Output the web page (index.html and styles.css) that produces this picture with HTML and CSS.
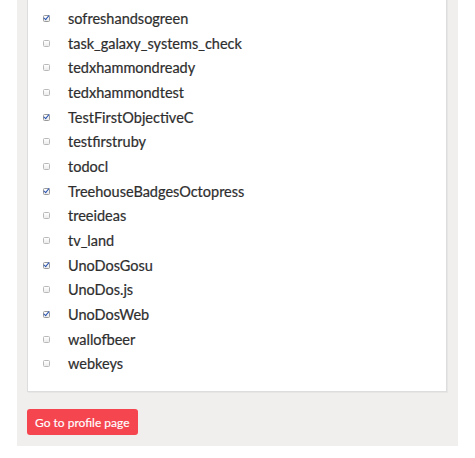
FILE: index.html
```html
<!DOCTYPE html>
<html>
<head>
<meta charset="utf-8">
<link rel="stylesheet" href="styles.css">
</head>
<body>
<div class="panel">
  <div class="box">
    <ul class="repos">
      <li><span class="cb on"></span>sofreshandsogreen</li>
      <li><span class="cb"></span>task_galaxy_systems_check</li>
      <li><span class="cb"></span>tedxhammondready</li>
      <li><span class="cb"></span>tedxhammondtest</li>
      <li><span class="cb on"></span>TestFirstObjectiveC</li>
      <li><span class="cb"></span>testfirstruby</li>
      <li><span class="cb"></span>todocl</li>
      <li><span class="cb on"></span>TreehouseBadgesOctopress</li>
      <li><span class="cb"></span>treeideas</li>
      <li><span class="cb"></span>tv_land</li>
      <li><span class="cb on"></span>UnoDosGosu</li>
      <li><span class="cb"></span>UnoDos.js</li>
      <li><span class="cb on"></span>UnoDosWeb</li>
      <li><span class="cb"></span>wallofbeer</li>
      <li><span class="cb"></span>webkeys</li>
    </ul>
  </div>
  <button class="btn">Go to profile page</button>
</div>
</body>
</html>
```

FILE: styles.css
```css
html, body {
  margin: 0;
  padding: 0;
  background: #ffffff;
}
body {
  font-family: Lato, "Open Sans", sans-serif;
  color: #2e2e2e;
}
.panel {
  width: 420px;
  margin: -20px 0 0 17px;
  background: #f0efed;
  padding: 0 11px 11px 10px;
  box-shadow: 0 2px 0 #d9d9d9;
}
.box {
  background: #ffffff;
  border: 1px solid #dddddd;
  box-shadow: 1px 1px 0 #e6e6e6;
  padding: 25px 0 15px 0;
}
.repos {
  list-style: none;
  margin: 0;
  padding: 0 0 0 15px;
}
.repos li {
  display: flex;
  align-items: center;
  height: 24.7px;
  font-size: 14.5px;
  -webkit-text-stroke: 0.2px #2e2e2e;
}
.cb {
  box-sizing: border-box;
  width: 7px;
  height: 7px;
  margin-right: 18px;
  border: 1px solid #b9b9b9;
  border-radius: 1.5px;
  background: linear-gradient(#ffffff, #ececec);
  position: relative;
  flex: none;
}
.cb.on {
  border-color: #9a9a9a;
}
.cb.on::after {
  content: "";
  position: absolute;
  left: 1px;
  top: -2px;
  width: 2px;
  height: 5px;
  border: solid #2a55b0;
  border-width: 0 1.8px 1.8px 0;
  transform: rotate(40deg);
}
.btn {
  display: block;
  margin-top: 17px;
  height: 26px;
  padding: 0 8px;
  background: #f5454f;
  color: #ffffff;
  border: none;
  border-radius: 3px;
  font-family: Lato, "Open Sans", sans-serif;
  font-size: 12px;
  -webkit-text-stroke: 0.15px #ffffff;
}
```
